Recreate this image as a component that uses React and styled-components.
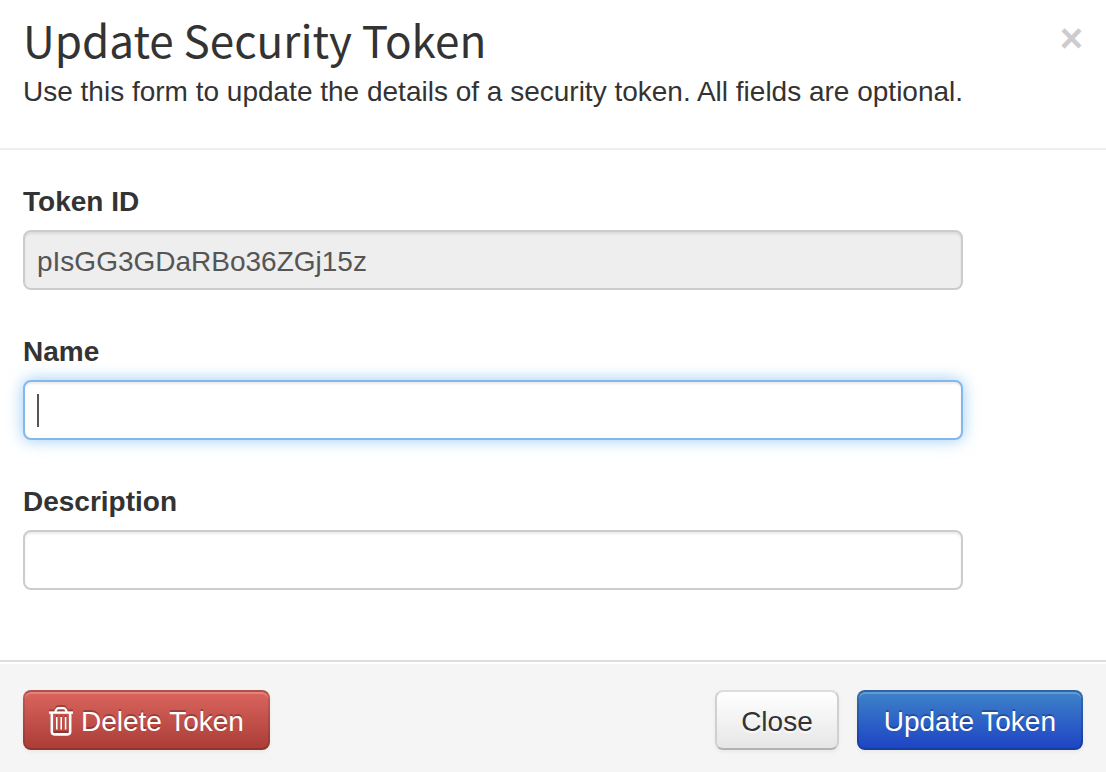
import React from 'react';
import { useState } from 'react';
import styled, { createGlobalStyle } from 'styled-components';

const App = () => {
  const [name, setName] = useState('');
  const [description, setDescription] = useState('');

  return (
    <>
      <GlobalStyle />
      <Modal onSubmit={(e) => e.preventDefault()}>
        <Header>
          <div>
            <Title>Update Security Token</Title>
            <Subtitle>
              Use this form to update the details of a security token. All
              fields are optional.
            </Subtitle>
          </div>
          <Dismiss type='button' aria-label='Dismiss'>
            ×
          </Dismiss>
        </Header>

        <Body>
          <Field>
            <Label htmlFor='token-id'>Token ID</Label>
            <Input id='token-id' value='pIsGG3GDaRBo36ZGj15z' readOnly />
          </Field>
          <Field>
            <Label htmlFor='token-name'>Name</Label>
            <InputWrapper>
              <Input
                id='token-name'
                value={name}
                onChange={(e) => setName(e.target.value)}
                $active
                autoComplete='off'
              />
              {!name && <Caret />}
            </InputWrapper>
          </Field>
          <Field>
            <Label htmlFor='token-description'>Description</Label>
            <Input
              id='token-description'
              value={description}
              onChange={(e) => setDescription(e.target.value)}
            />
          </Field>
        </Body>

        <Footer>
          <DangerButton type='button'>
            <TrashIcon />
            Delete Token
          </DangerButton>
          <Actions>
            <Button type='button'>Close</Button>
            <PrimaryButton type='submit'>Update Token</PrimaryButton>
          </Actions>
        </Footer>
      </Modal>
    </>
  );
};

export default App;

const TrashIcon = () => (
  <TrashSvg viewBox='0 0 24 30' aria-hidden='true'>
    <path d='M0 5.6h24' strokeWidth='2.4' />
    <path d='M6.2 5L7.3 2.5Q8 1.1 9.6 1.1h4.8Q16 1.1 16.7 2.5l1.1 2.5' strokeWidth='2.2' />
    <path d='M2.8 6v18.6Q2.8 27.4 5.4 27.4h13.2Q21.2 27.4 21.2 24.6v-18.6' strokeWidth='2.6' />
    <path d='M7.8 10v12.5M12.2 10v12.5M16.6 10v12.5' strokeWidth='1.6' />
  </TrashSvg>
);

const GlobalStyle = createGlobalStyle`
  * {
    box-sizing: border-box;
  }

  body {
    margin: 0;
    background: #fff;
    color: #333;
    font-family: 'Liberation Sans', Arial, sans-serif;
    font-size: 28px;
    line-height: 40px;
  }
`;

const Modal = styled.form`
  display: flex;
  flex-direction: column;
  min-height: 100vh;
`;

const Header = styled.header`
  display: flex;
  justify-content: space-between;
  align-items: flex-start;
  padding: 8px 23px 36px;
  border-bottom: 2px solid #eee;
`;

const Title = styled.h3`
  margin: 0 0 2px;
  font-family: 'Noto Sans CJK SC', sans-serif;
  font-size: 44px;
  font-weight: 400;
  line-height: 62px;
`;

const Subtitle = styled.p`
  margin: 0;
`;

const Dismiss = styled.button`
  margin-top: 10px;
  padding: 0;
  border: 0;
  background: transparent;
  color: #ccc;
  font-family: inherit;
  font-size: 40px;
  font-weight: 700;
  line-height: 40px;
  cursor: pointer;
`;

const Body = styled.main`
  display: flex;
  flex-direction: column;
  gap: 42px;
  padding: 32px 23px 70px;
`;

const Field = styled.div`
  display: flex;
  flex-direction: column;
  gap: 8px;
  max-width: 940px;
`;

const Label = styled.label`
  font-weight: 700;
`;

const InputWrapper = styled.div`
  position: relative;
  display: flex;
`;

const Input = styled.input`
  width: 100%;
  height: 60px;
  padding: 10px 12px 6px;
  border: 2px solid ${(props) => (props.$active ? '#86b7ec' : '#ccc')};
  border-radius: 8px;
  outline: none;
  background: #fff;
  color: #555;
  font-family: inherit;
  font-size: 28px;
  line-height: 40px;
  box-shadow: inset 0 2px 2px rgba(0, 0, 0, 0.075)
    ${(props) => props.$active && ', 0 0 16px rgba(82, 168, 236, 0.6)'};

  &:read-only {
    background: #eee;
  }
`;

const Caret = styled.span`
  position: absolute;
  top: 14px;
  left: 14px;
  width: 2px;
  height: 33px;
  background: #555;
  pointer-events: none;
`;

const Footer = styled.footer`
  display: flex;
  flex: 1;
  justify-content: space-between;
  align-items: flex-start;
  padding: 28px 23px 22px;
  border-top: 2px solid #ddd;
  background: #f5f5f5;
  box-shadow: inset 0 2px 0 #fff;
`;

const Actions = styled.div`
  display: flex;
  gap: 18px;
`;

const Button = styled.button`
  display: flex;
  align-items: center;
  height: 60px;
  padding: 3px 24px 0;
  border: 2px solid;
  border-color: #dcdcdc #d0d0d0 #b3b3b3;
  border-radius: 8px;
  background: linear-gradient(#fff, #e6e6e6) padding-box;
  color: #333;
  font-family: inherit;
  font-size: 28px;
  line-height: 40px;
  text-shadow: 0 2px 2px rgba(255, 255, 255, 0.75);
  box-shadow: inset 0 2px 0 rgba(255, 255, 255, 0.2),
    0 2px 4px rgba(0, 0, 0, 0.05);
  cursor: pointer;
`;

const PrimaryButton = styled(Button)`
  padding: 3px 25px 0;
  border-color: rgba(0, 0, 60, 0.25) rgba(0, 0, 0, 0.15) rgba(0, 60, 60, 0.3);
  background: linear-gradient(#3f85c9, #1d42c4) border-box;
  color: #fff;
  text-shadow: 0 -2px 0 rgba(0, 0, 0, 0.25);
`;

const DangerButton = styled(Button)`
  gap: 8px;
  border-color: rgba(0, 0, 0, 0.2) rgba(0, 0, 0, 0.1) rgba(0, 0, 0, 0.15);
  background: linear-gradient(#dc6660, #a93c35) border-box;
  color: #fff;
  text-shadow: 0 -2px 0 rgba(0, 0, 0, 0.25);
`;

const TrashSvg = styled.svg`
  width: 24px;
  height: 30px;
  fill: none;
  stroke: #fff;
  stroke-linejoin: round;
  filter: drop-shadow(0 -2px 0 rgba(0, 0, 0, 0.25));
`;
